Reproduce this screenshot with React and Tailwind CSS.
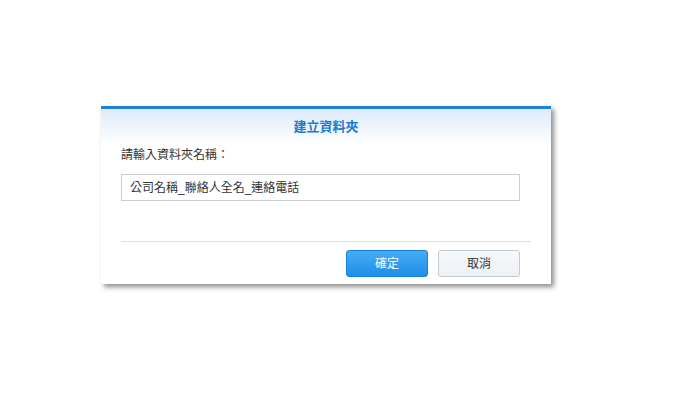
export default function App() {
  return (
    <div
      className="w-[688px] h-[405px] bg-white overflow-hidden pt-[106px] pl-[101px]"
      style={{ fontFamily: '"Liberation Sans", "Noto Sans CJK TC", sans-serif' }}
    >
      <div className="w-[450px] h-[178px] bg-white border-t-[3px] border-[#1b82d8] shadow-[3px_3px_5px_rgba(0,0,0,0.45)] flex flex-col">
        {/* Title */}
        <div className="h-[36px] flex items-center justify-center bg-gradient-to-b from-[#dcebf9] to-white">
          <span className="text-[13px] font-bold text-[#1a7ad2]">建立資料夾</span>
        </div>

        {/* Body */}
        <div className="px-[20px]">
          <div className="h-[20px] flex items-center text-[12px] text-[#333]">請輸入資料夾名稱：</div>
          <div className="mt-[9px] mr-[11px] h-[27px] border border-[#c9ced3] flex items-center px-[8px] text-[12px] text-[#333]">
            公司名稱_聯絡人全名_連絡電話
          </div>
          <div className="mt-[40px] h-px bg-[#dcdfe2]" />
          <div className="mt-[8px] mr-[11px] flex justify-end gap-[10px]">
            <button className="w-[82px] h-[27px] rounded-[3px] border border-[#1b82d8] bg-gradient-to-b from-[#45acf5] to-[#1d8ee8] text-white text-[12px]">
              確定
            </button>
            <button className="w-[82px] h-[27px] rounded-[3px] border border-[#c3ccd5] bg-gradient-to-b from-[#f6f8fa] to-[#edf1f5] text-[#333] text-[12px]">
              取消
            </button>
          </div>
        </div>
      </div>
    </div>
  );
}
